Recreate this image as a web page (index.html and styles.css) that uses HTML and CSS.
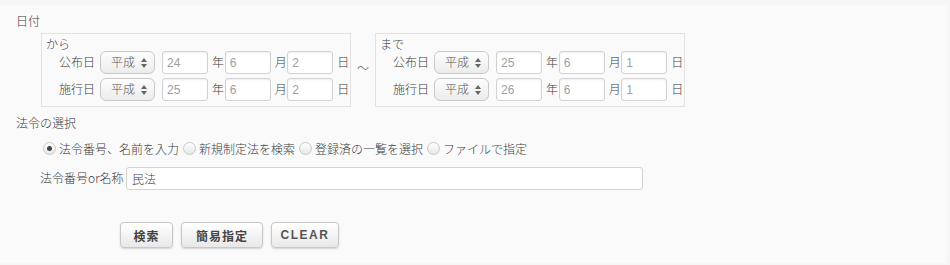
FILE: index.html
```html
<!DOCTYPE html>
<html lang="ja">
<head>
  <meta charset="UTF-8">
  <title>法令検索</title>
  <link rel="stylesheet" href="styles.css">
</head>
<body>
  <div class="page">
    <div class="section-title">日付</div>
    <div class="date-area">
      <div class="date-box">
        <div class="box-title">から</div>
        <div class="date-row">
          <span class="row-label">公布日</span>
          <span class="era-select">平成<svg class="arrows" viewBox="0 0 6 10" width="6" height="10"><path d="M0 4 L3 0 L6 4 Z M0 6 L3 10 L6 6 Z"/></svg></span>
          <input class="num" type="text" value="24"><span class="unit">年</span>
          <input class="num" type="text" value="6"><span class="unit">月</span>
          <input class="num" type="text" value="2"><span class="unit">日</span>
        </div>
        <div class="date-row">
          <span class="row-label">施行日</span>
          <span class="era-select">平成<svg class="arrows" viewBox="0 0 6 10" width="6" height="10"><path d="M0 4 L3 0 L6 4 Z M0 6 L3 10 L6 6 Z"/></svg></span>
          <input class="num" type="text" value="25"><span class="unit">年</span>
          <input class="num" type="text" value="6"><span class="unit">月</span>
          <input class="num" type="text" value="2"><span class="unit">日</span>
        </div>
      </div>
      <div class="tilde">～</div>
      <div class="date-box">
        <div class="box-title">まで</div>
        <div class="date-row">
          <span class="row-label">公布日</span>
          <span class="era-select">平成<svg class="arrows" viewBox="0 0 6 10" width="6" height="10"><path d="M0 4 L3 0 L6 4 Z M0 6 L3 10 L6 6 Z"/></svg></span>
          <input class="num" type="text" value="25"><span class="unit">年</span>
          <input class="num" type="text" value="6"><span class="unit">月</span>
          <input class="num" type="text" value="1"><span class="unit">日</span>
        </div>
        <div class="date-row">
          <span class="row-label">施行日</span>
          <span class="era-select">平成<svg class="arrows" viewBox="0 0 6 10" width="6" height="10"><path d="M0 4 L3 0 L6 4 Z M0 6 L3 10 L6 6 Z"/></svg></span>
          <input class="num" type="text" value="26"><span class="unit">年</span>
          <input class="num" type="text" value="6"><span class="unit">月</span>
          <input class="num" type="text" value="1"><span class="unit">日</span>
        </div>
      </div>
    </div>

    <div class="section-title law-title">法令の選択</div>
    <div class="radio-row">
      <label class="radio checked"><span class="dot"></span>法令番号、名前を入力</label>
      <label class="radio"><span class="dot"></span>新規制定法を検索</label>
      <label class="radio"><span class="dot"></span>登録済の一覧を選択</label>
      <label class="radio"><span class="dot"></span>ファイルで指定</label>
    </div>
    <div class="name-row">
      <span class="name-label">法令番号or名称</span>
      <input class="name-input" type="text" value="民法">
    </div>

    <div class="buttons">
      <button class="btn search">検索</button>
      <button class="btn simple">簡易指定</button>
      <button class="btn latin">CLEAR</button>
    </div>
  </div>
</body>
</html>
```

FILE: styles.css
```css
* {
  box-sizing: border-box;
  margin: 0;
  padding: 0;
}
body {
  background-color: #f6f6f6;
  color: #3a3a3a;
  font: 300 12px/1.2 "Noto Sans CJK JP", "Liberation Sans", sans-serif;
  width: 950px;
  height: 265px;
  overflow: hidden;
}
.page {
  background-color: #fafafa;
  margin-top: 5px;
  width: 947px;
  height: 258px;
  padding: 9px 0 0 16px;
}
.section-title {
  height: 19px;
}
.date-area {
  display: flex;
  align-items: flex-start;
  margin-left: 25px;
}
.date-box {
  width: 310px;
  height: 74px;
  border: 1px solid #e2e2e2;
  padding: 3px 0 0 4px;
}
.box-title {
  height: 14px;
  line-height: 14px;
}
.date-row {
  display: flex;
  align-items: center;
  height: 23px;
  margin-bottom: 4px;
  padding-left: 13px;
}
.row-label {
  width: 42px;
}
.era-select {
  display: flex;
  align-items: center;
  justify-content: space-between;
  width: 56px;
  height: 23px;
  padding: 0 7px 0 10px;
  margin-right: 7px;
  border: 1px solid #c8c8c8;
  border-radius: 6px;
  background: linear-gradient(#fdfdfd, #ececec);
  color: #555;
}
.arrows {
  fill: #666;
}
.num {
  width: 46px;
  height: 23px;
  padding: 0 4px;
  border: 1px solid #d2d2d2;
  border-radius: 3px;
  background-color: #fff;
  color: #a0a0a0;
  font: 12px "Liberation Sans", sans-serif;
  box-shadow: inset 0 1px 2px rgba(0, 0, 0, 0.07);
}
.unit {
  width: 17px;
  padding-left: 4px;
}
.tilde {
  width: 24px;
  padding: 28px 0 0 6px;
  color: #555;
}
.law-title {
  margin-top: 9px;
}
.radio-row {
  display: flex;
  align-items: center;
  height: 18px;
  margin: 5px 0 0 27px;
}
.radio {
  display: flex;
  align-items: center;
  margin-right: 4px;
}
.dot {
  display: flex;
  align-items: center;
  justify-content: center;
  width: 13px;
  height: 13px;
  margin-right: 3px;
  border: 1px solid #cacaca;
  border-radius: 50%;
  background: linear-gradient(#fff, #e6e6e6);
}
.checked .dot::after {
  content: "";
  width: 5px;
  height: 5px;
  border-radius: 50%;
  background-color: #444;
}
.name-row {
  display: flex;
  align-items: center;
  margin: 9px 0 0 24px;
}
.name-label {
  width: 86px;
}
.name-input {
  width: 517px;
  height: 23px;
  padding: 0 5px;
  border: 1px solid #d2d2d2;
  border-radius: 3px;
  background-color: #fff;
  color: #444;
  font: 300 12px "Noto Sans CJK JP", sans-serif;
}
.buttons {
  display: flex;
  gap: 8px;
  margin: 32px 0 0 104px;
}
.btn {
  height: 26px;
  padding: 0;
  border: 1px solid #c8c8c8;
  border-radius: 4px;
  background: linear-gradient(#ffffff, #e8e8e8);
  box-shadow: 0 1px 2px rgba(0, 0, 0, 0.15);
  color: #444;
  font: bold 12px "Noto Sans CJK JP", sans-serif;
  letter-spacing: 1px;
}
.search {
  width: 53px;
}
.simple {
  width: 82px;
}
.latin {
  width: 68px;
  color: #555;
  font-family: "Liberation Sans", sans-serif;
  letter-spacing: 1.5px;
}
```
